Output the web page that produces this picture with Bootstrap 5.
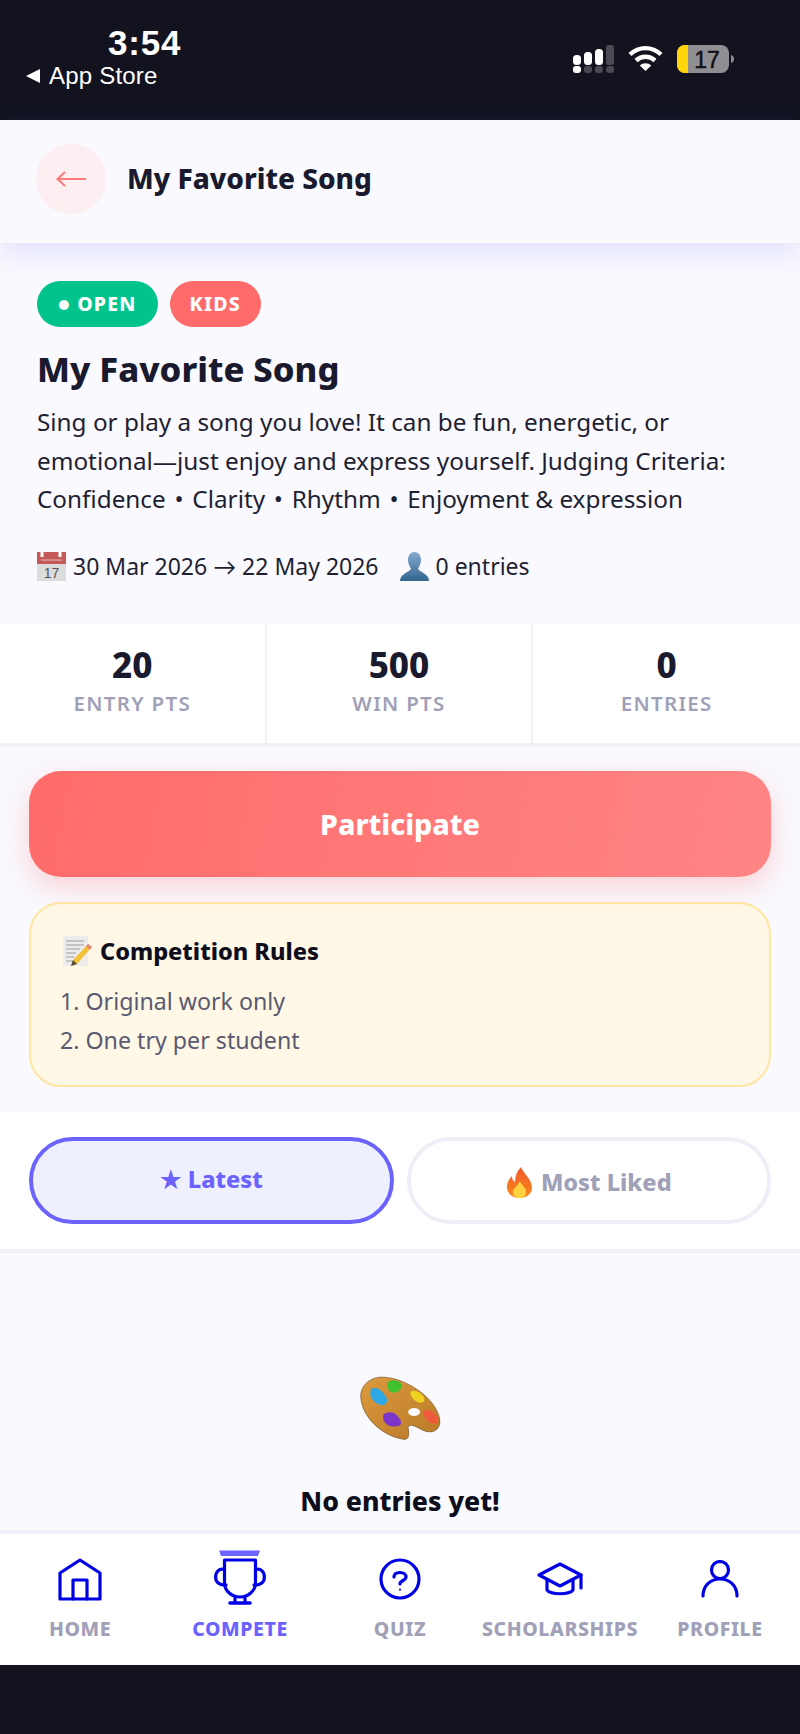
<!DOCTYPE html>
<html lang="en">
<head>
<meta charset="utf-8">
<title>My Favorite Song</title>
<link href="https://cdn.jsdelivr.net/npm/bootstrap@5.3.0/dist/css/bootstrap.min.css" rel="stylesheet">
<style>
html,body{height:1734px;overflow:hidden}
body{width:800px;background:#12131f;font-family:"Noto Sans",Lato,sans-serif;color:#1a1a2e;-webkit-font-smoothing:antialiased}
.phone-status{height:120px;background:#12131f;color:#fff;font-family:"Liberation Sans",Arial,sans-serif;padding:25px 66px 0 26px}
.status-time{font-size:35px;line-height:36px;font-weight:700;padding-left:82px;letter-spacing:.8px}
.status-back{font-size:24px;line-height:26px;margin-top:2px;gap:9px;letter-spacing:.2px}
.status-icons{gap:14px;padding-top:20px}
.page-head{height:123px;background:#f9f9fe;padding:0 36px 6px;gap:21px;box-shadow:0 10px 26px rgba(108,99,255,.16);position:relative;z-index:2}
.back-circle{width:70px;height:70px;border-radius:50%;background:#fdeef1;border:0;padding:0}
.page-title{font-size:28px;font-weight:800;margin:0 0 2px;line-height:36px}
.main-bg{background:#f9f9fe}
.hero{padding:38px 37px 0;height:381px}
.tag-pill{height:46px;border-radius:23px;font-size:19.5px;font-weight:800;letter-spacing:1.2px;color:#fff;padding:0 21px;line-height:46px}
.tag-open{background:#00c48c}
.tag-kids{background:#ff6b6b;margin-left:12px;padding:0 20px}
.hero-title{font-size:34.6px;line-height:48px;font-weight:800;margin:18px 0 10px}
.hero-text{font-size:24.3px;line-height:38.7px;margin:0 0 31px;color:#1f1f33}
.hero-meta{font-size:23px;line-height:32px;color:#1f1f33}
.meta-pair{gap:7px}
.meta-second{margin-left:21px}
.stat-row{background:#fff;height:123px;border-bottom:4px solid #f0f0f6}
.stat-cell{height:119px;padding-top:21px;text-align:center;border-right:2px solid #f0f0f6}
.stat-cell:last-child{border-right:0}
.stat-num{font-size:35px;line-height:40px;font-weight:800}
.stat-label{font-size:20.5px;line-height:28px;color:#a0a0b8;letter-spacing:1.3px;font-weight:600;margin-top:4px}
.action-zone{padding:24px 29px 25px}
.cta-btn{height:106px;border-radius:32px;border:0;width:100%;color:#fff;font-size:28.6px;font-weight:800;background:linear-gradient(100deg,#ff6b6b,#ff8585);box-shadow:0 10px 28px rgba(255,107,107,.28)}
.rules-box{margin-top:25px;height:185px;border-radius:32px;border:2.5px solid #ffe6a3;background:#fff8e6;padding:30px 31px 0}
.rules-head{font-size:23.5px;line-height:34px;font-weight:800;color:#0d0d1c;gap:8px}
.rules-list{list-style:none;padding:0;margin:14px 0 0 -2px;font-size:23.2px;line-height:39px;color:#5a5a72}
.tab-band{background:#fff;height:141px;padding:25px 29px 0;gap:13px;border-bottom:4px solid #f0f0f6}
.tab-pill{height:87px;flex:1 1 0;border-radius:44px;font-size:23.5px;font-weight:800;background:#fff;border:4px solid #eeeef6;color:#a0a0b8;gap:8px;padding:4px 0 0}
.tab-pill.is-on{background:#eef0fd;border-color:#6c63ff;color:#6c63ff;padding:0 0 2px}
.empty-zone{height:277px;text-align:center;padding-top:123px}
.empty-zone svg{display:block;margin:0 auto}
.empty-text{font-size:26.6px;line-height:36px;font-weight:800;color:#0d0d1c;margin-top:42px}
.tabbar{height:135px;background:#fff;border-top:4px solid #f0f0fb}
.tab-item{width:160px;height:131px;position:relative;font-size:19.5px;font-weight:800;letter-spacing:.6px;color:#a0a0b8}
.tab-item.is-on{color:#6c63ff}
.tab-icon{height:72px;padding-top:24px}
.tab-icon svg{fill:none;stroke:#0000e6;stroke-width:3.2;stroke-linecap:round;stroke-linejoin:round;display:block;margin:0 auto}
.tab-name{line-height:24px;margin-top:11px}
.trophy-up{margin-top:-8px !important}
.bottom-dark{height:69px;background:#12131f}
</style>
</head>
<body>
<div class="phone-status d-flex justify-content-between">
  <div>
    <div class="status-time">3:54</div>
    <div class="status-back d-flex align-items-center">
      <svg width="14" height="14" viewBox="0 0 14 14"><path d="M14 0V14L0 7Z" fill="#fff"/></svg>
      <span>App Store</span>
    </div>
  </div>
  <div class="status-icons d-flex align-items-start">
    <svg width="41" height="28" viewBox="0 0 41 28">
      <rect x="0" y="10" width="8" height="10" rx="3.5" fill="#fff"/><rect x="11" y="7" width="8" height="13" rx="3.5" fill="#fff"/><rect x="22" y="4" width="8" height="16" rx="3.5" fill="#fff"/><rect x="33" y="0" width="8" height="20" rx="2.5" fill="#4a4a52"/>
      <rect x="0" y="21" width="8" height="7" rx="3" fill="#fff"/><rect x="11" y="21" width="8" height="7" rx="3" fill="#4a4a52"/><rect x="22" y="21" width="8" height="7" rx="3" fill="#4a4a52"/><rect x="33" y="21" width="8" height="7" rx="3" fill="#4a4a52"/>
    </svg>
    <svg width="35" height="26" viewBox="0 0 35 26" fill="none" stroke="#fff" stroke-width="4.4">
      <path d="M2 9.5C11 1 24 1 33 9.5"/><path d="M8 15.5C13.5 10.5 21.5 10.5 27 15.5"/><path d="M17.5 26L11.8 20.4C15 17.6 20 17.6 23.2 20.4Z" fill="#fff" stroke="none"/>
    </svg>
    <svg width="57" height="28" viewBox="0 0 57 28">
      <rect x="0" y="0" width="52" height="28" rx="8" fill="#8e8e93"/>
      <path d="M8 0H11V28H8A8 8 0 0 1 0 20V8A8 8 0 0 1 8 0Z" fill="#ffd60a"/>
      <path d="M54 10C56.500 11 57 12.500 57 14C57 15.500 56.500 17 54 18Z" fill="#8e8e93"/>
      <text x="30" y="22.500" text-anchor="middle" font-family="Liberation Sans,Arial,sans-serif" font-size="23" fill="#111116" stroke="#111116" stroke-width=".5">17</text>
    </svg>
  </div>
</div>

<header class="page-head d-flex align-items-center">
  <button class="back-circle d-flex align-items-center justify-content-center" type="button" aria-label="Back">
    <svg width="30" height="16" viewBox="0 0 30 16" fill="none" stroke="#ff7b7b" stroke-width="2"><path d="M30 8H2M9 1L1.500 8L9 15"/></svg>
  </button>
  <h2 class="page-title">My Favorite Song</h2>
</header>

<main class="main-bg">
  <section class="hero">
    <div class="d-flex">
      <span class="tag-pill tag-open">● OPEN</span>
      <span class="tag-pill tag-kids">KIDS</span>
    </div>
    <h1 class="hero-title">My Favorite Song</h1>
    <p class="hero-text">Sing or play a song you love! It can be fun, energetic, or emotional—just enjoy and express yourself. Judging Criteria: Confidence&#8202; • &#8202;Clarity&#8202; • &#8202;Rhythm&#8202; • &#8202;Enjoyment &amp; expression</p>
    <div class="hero-meta d-flex align-items-center">
      <span class="meta-pair d-flex align-items-center">
        <svg width="29" height="29" viewBox="0 0 29 29">
          <rect width="29" height="29" fill="#dcdcdc"/><rect width="29" height="12" fill="#c45a58"/>
          <path d="M5 0v5M23 0v5" stroke="#fff" stroke-width="3"/><path d="M4 8h21" stroke="#e9b9b7" stroke-width="1"/>
          <text x="14.500" y="26" text-anchor="middle" font-family="Liberation Sans,Arial,sans-serif" font-size="14" fill="#555">17</text>
        </svg>
        <span>30 Mar 2026 → 22 May 2026</span>
      </span>
      <span class="meta-pair meta-second d-flex align-items-center">
        <svg width="29" height="29" viewBox="0 0 29 29">
          <defs><linearGradient id="pg" x1="0" y1="0" x2="0" y2="1"><stop offset="0" stop-color="#86abd0"/><stop offset="1" stop-color="#33658f"/></linearGradient></defs>
          <path d="M14.500 0C19 0 21 4 21 8C21 12 19 15 18 17C20 20 29 22 29 29H0C0 22 9 20 11 17C10 15 8 12 8 8C8 4 10 0 14.500 0Z" fill="url(#pg)"/>
        </svg>
        <span>0 entries</span>
      </span>
    </div>
  </section>

  <section class="stat-row row g-0">
    <div class="col-4 stat-cell"><div class="stat-num">20</div><div class="stat-label">ENTRY PTS</div></div>
    <div class="col-4 stat-cell"><div class="stat-num">500</div><div class="stat-label">WIN PTS</div></div>
    <div class="col-4 stat-cell"><div class="stat-num">0</div><div class="stat-label">ENTRIES</div></div>
  </section>

  <section class="action-zone">
    <button class="btn cta-btn" type="button">Participate</button>
    <div class="rules-box">
      <div class="rules-head d-flex align-items-center">
        <svg width="30" height="32" viewBox="0 0 30 32">
          <rect x="1" y="1" width="25" height="30" fill="#ececec"/>
          <path d="M4 6h18M4 10h18M4 14h14M4 18h10M4 22h8M4 26h8" stroke="#9a9a9a" stroke-width="1"/>
          <path d="M26 9L30 12L15 29L9 31L11 25Z" fill="#f3c23c"/><path d="M11 25L15 29L9 31Z" fill="#5a4a3a"/><path d="M26 9L30 12L28 14.500L24 11.500Z" fill="#e8807a"/>
        </svg>
        <span>Competition Rules</span>
      </div>
      <ol class="rules-list">
        <li>1. Original work only</li>
        <li>2. One try per student</li>
      </ol>
    </div>
  </section>

  <section class="tab-band d-flex">
    <button class="btn tab-pill is-on d-flex align-items-center justify-content-center" type="button">★ Latest</button>
    <button class="btn tab-pill d-flex align-items-center justify-content-center" type="button">
      <svg width="27" height="31" viewBox="0 0 27 31">
        <defs><linearGradient id="fg" x1="0" y1="0" x2="0" y2="1"><stop offset="0" stop-color="#f0592b"/><stop offset="1" stop-color="#f98a1c"/></linearGradient></defs>
        <path d="M15 0C17 6 26 12 26 21C26 27 20 31 13.500 31C6 31 1 26 1 20C1 15 4 11 6 9C6 12 7 14 9 15C9 9 11 4 15 0Z" fill="url(#fg)"/>
        <path d="M14 14C15 18 20 20 20 25C20 29 17 31 13.500 31C10 31 7 29 7 25C7 21 12 19 14 14Z" fill="#ffd23f"/>
      </svg>
      <span>Most Liked</span>
    </button>
  </section>

  <section class="empty-zone">
    <svg width="83" height="65" viewBox="62 -15 250 195">
      <defs><linearGradient id="wd" x1="0" y1="0" x2="1" y2="1"><stop offset="0" stop-color="#dc9a3e"/><stop offset="1" stop-color="#b97a28"/></linearGradient></defs>
      <path d="M68 55C62 15 95 -12 130 -12C200 -12 295 50 305 115C309 150 280 160 255 148C235 138 213 125 210 140C212 160 215 178 195 175C130 165 75 110 68 55Z" fill="url(#wd)" stroke="#6e4a18" stroke-width="2"/>
      <path d="M97 25C110 15 128 25 138 40C150 52 150 68 135 72C118 74 100 58 96 42Z" fill="#2ea8e6"/>
      <path d="M148 5C155 -6 180 -6 190 10C194 22 180 35 165 35C150 32 144 18 148 5Z" fill="#3fc02e"/>
      <path d="M217 32C228 25 245 32 255 45C264 58 258 66 245 65C230 62 214 46 217 32Z" fill="#eed21f"/>
      <path d="M136 100C150 90 170 92 182 110C195 125 188 138 170 136C150 140 128 122 136 100Z" fill="#7d35c9"/>
      <path d="M258 90C270 82 288 92 298 108C306 122 295 130 282 128C266 122 252 104 258 90Z" fill="#ef5a3c"/>
      <ellipse cx="228" cy="93" rx="18" ry="12" fill="#f9f9fe"/>
    </svg>
    <div class="empty-text">No entries yet!</div>
  </section>
</main>

<nav class="tabbar d-flex">
  <a class="tab-item text-center text-decoration-none">
    <div class="tab-icon"><svg width="44" height="44" viewBox="0 0 44 44"><path d="M2 41V15L22 2L42 15V41Z"/><path d="M15 41V22H29V41"/></svg></div>
    <div class="tab-name">HOME</div>
  </a>
  <a class="tab-item is-on text-center text-decoration-none">
    <div class="tab-icon"><svg class="trophy-up" width="52" height="56" viewBox="0 0 52 56">
      <path d="M5 0.500H46L44 6H7Z" fill="#6c63ff" stroke="none"/>
      <path d="M10.500 10H41.500V33C41.500 41 34 47 26 47C18 47 10.500 41 10.500 33Z"/>
      <path d="M10.500 19.500C5 18 1.600 22 1.600 27C1.600 32 5 35.500 12 35"/><path d="M41.500 19.500C47 18 50.400 22 50.400 27C50.400 32 47 35.500 40 35"/>
      <path d="M21 47V52M31 47V52"/><path d="M16 53H36" stroke-width="3.6"/>
    </svg></div>
    <div class="tab-name">COMPETE</div>
  </a>
  <a class="tab-item text-center text-decoration-none">
    <div class="tab-icon"><svg width="42" height="42" viewBox="0 0 42 42"><circle cx="21" cy="21" r="19"/><path d="M15 19C15 16 17.500 14.500 21 14.500C24.500 14.500 27 16.500 27 19C27 22.500 21 22.500 21 26"/><path d="M21 31.500V31.700" stroke-width="2"/></svg></div>
    <div class="tab-name">QUIZ</div>
  </a>
  <a class="tab-item text-center text-decoration-none">
    <div class="tab-icon"><svg width="46" height="36" viewBox="0 0 46 36" style="margin-top:4px"><path d="M23 2L44 13L23 24L2 13Z"/><path d="M10 18V28C14 33 32 33 36 28V18"/><path d="M44 13V26"/></svg></div>
    <div class="tab-name">SCHOLARSHIPS</div>
  </a>
  <a class="tab-item text-center text-decoration-none">
    <div class="tab-icon"><svg width="38" height="38" viewBox="0 0 38 38" style="margin-top:2px"><circle cx="19" cy="10" r="8.500"/><path d="M2 36C2 25 10 19 19 19C28 19 36 25 36 36"/></svg></div>
    <div class="tab-name">PROFILE</div>
  </a>
</nav>
<div class="bottom-dark"></div>
</body>
</html>
